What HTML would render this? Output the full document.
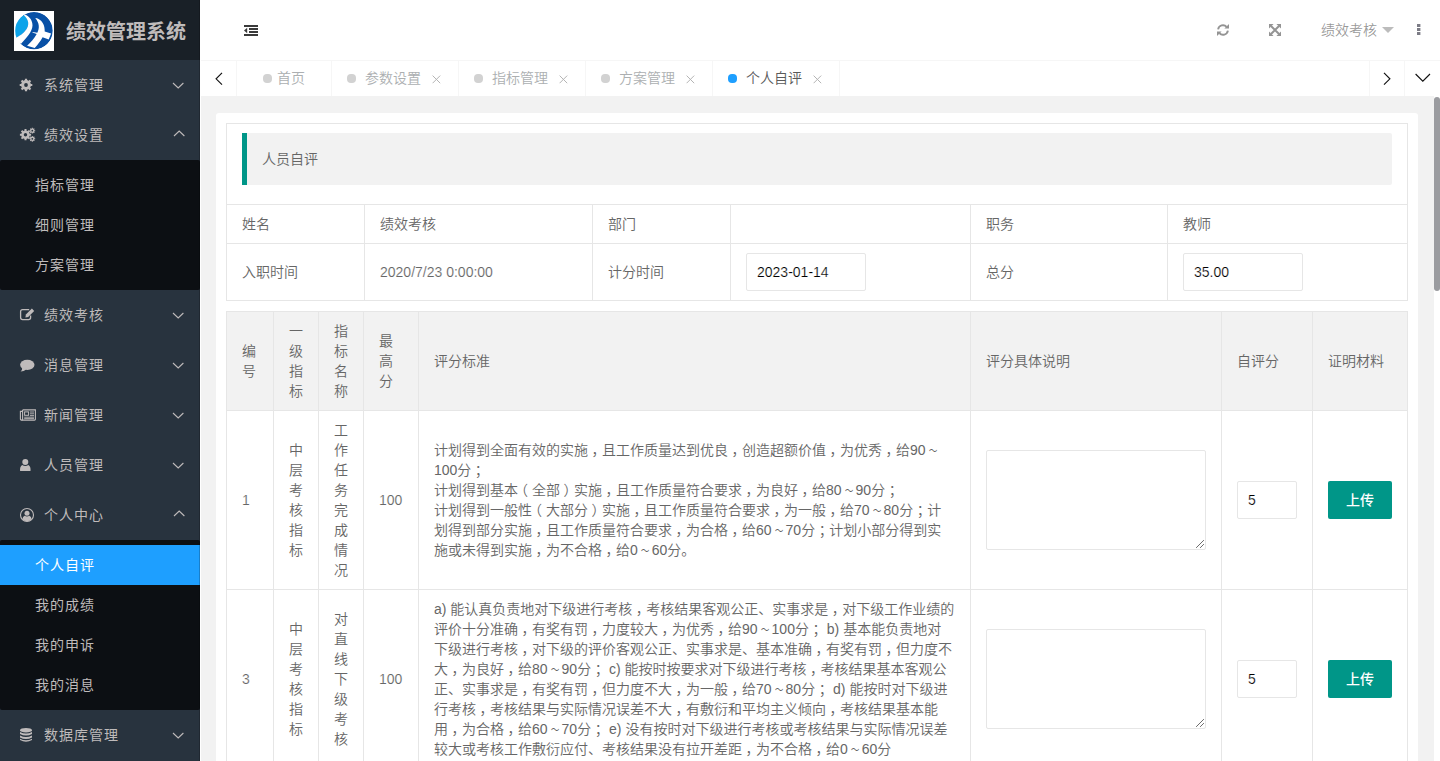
<!DOCTYPE html>
<html lang="zh-CN">
<head>
<meta charset="utf-8">
<title>绩效管理系统</title>
<style>
*{box-sizing:border-box;margin:0;padding:0}
html,body{width:1440px;height:761px;overflow:hidden;background:#f2f2f2}
body{font-family:"Liberation Sans","Noto Sans CJK SC",sans-serif;font-size:14px;color:#333;position:relative;line-height:24px}
a{text-decoration:none;color:inherit}
ul{list-style:none}
/* ---------- side ---------- */
#side{position:absolute;left:0;top:0;width:200px;height:761px;background:#28333e;overflow:hidden}
#side:after{content:"";position:absolute;left:199px;top:0;width:1px;height:761px;background:rgba(0,0,0,.2)}
#logo{height:60px;background:#192027;position:relative}
#logo svg{position:absolute;left:14px;top:11px}
#logo h1{position:absolute;left:66px;top:0;line-height:64px;font-size:20px;font-weight:bold;color:rgb(191,187,187);white-space:nowrap}
.nav-item{height:50px;line-height:50px;position:relative;color:rgb(191,187,187);font-size:14px}
.nav-item .ico{position:absolute}
.nav-item span{position:absolute;left:44px;top:0;white-space:nowrap;letter-spacing:1px}
.nav-item .more{position:absolute;left:172px;top:22px}
.nav-child{background:#0c0f13;padding:5px 0;border-radius:2px}
.nav-child li{height:40px;line-height:40px;padding-left:35px;color:rgb(191,187,187);font-size:14px;letter-spacing:1px}
.nav-child li.this{background:#1e9fff;color:#fff}
/* ---------- header ---------- */
#header{position:absolute;left:200px;top:0;width:1240px;height:60px;background:#fff}
#header svg{position:absolute}
#header .uname{font-weight:350;position:absolute;left:1121px;top:0;line-height:60px;font-size:14px;color:rgba(107,107,107,.7);white-space:nowrap}
#header .caret{position:absolute;left:1182px;top:27.4px;width:0;height:0;border:6px solid transparent;border-top-color:rgba(160,160,160,.7);border-bottom-width:0}
/* ---------- tabs ---------- */
#tabs{position:absolute;left:200px;top:60px;width:1240px;height:36px;background:#fff;border-left:1px solid #fff}
#tabs:before{content:"";position:absolute;left:0;top:0;width:1239px;height:1px;background:#f6f6f6}
#tabs .ctl{position:absolute;top:1px;height:35px;border-right:1px solid #f6f6f6}
#tabs .ctl svg{position:absolute}
#tabs .tab{position:absolute;top:1px;height:35px;line-height:35px;border-right:1px solid #f6f6f6;color:#acafb1;font-size:14px;white-space:nowrap}
#tabs .tab i{position:absolute;top:12.7px;width:9px;height:9.4px;border-radius:4px;background:#d2d2d2}
#tabs .tab b{position:absolute;font-weight:350;top:0}
#tabs .tab svg{position:absolute;top:14px}
#tabs .tab.this{color:#5a5a5a}
#tabs .tab.this i{background:#1e9fff}
/* ---------- body ---------- */
#main{position:absolute;left:200px;top:96px;width:1240px;height:665px;overflow:hidden;background:#f2f2f2}
#lstrip{position:absolute;left:0;top:0;width:1px;height:665px;background:#fff}
#strack{position:absolute;right:0;top:0;width:6px;height:665px;background:#fff}
#sbar{position:absolute;right:0;top:1px;width:6px;height:194px;border-radius:3px;background:#9b9ca0}
#card{position:absolute;left:16px;top:17px;width:1202px;height:900px;background:#fff;border-radius:3px;padding:10px}
table{border-collapse:collapse;border-spacing:0;table-layout:fixed;width:1181px;color:#666;font-size:14px;font-weight:350}
table td,table th{border:1px solid #e6e6e6;padding:9px 15px;line-height:20px;font-weight:inherit;text-align:left;vertical-align:middle;word-break:break-all}
#t2{margin-top:10px}
#t2 th{background:#f2f2f2}
.quote{border-left:5px solid #009688;background:#f2f2f2;border-radius:0 2px 2px 0;padding:15px;line-height:22px;margin-bottom:10px;height:52px}
.inp{display:block;height:38px;line-height:36px;border:1px solid #e6e6e6;border-radius:2px;background:#fff;padding-left:10px;color:#000;font-size:14px;font-weight:400;-webkit-text-stroke:0.2px #fff}
.num{-webkit-text-stroke:0.15px #fff}
.ta{display:block;width:220px;height:100px;border:1px solid #e6e6e6;border-radius:2px;background:#fff;position:relative}
.ta svg{position:absolute;right:1px;bottom:1px}
.btn{display:block;width:64px;height:38px;line-height:38px;background:#009688;color:#fff;text-align:center;border-radius:2px;font-size:14px;font-weight:500}
.crit{white-space:nowrap}
.crit i{font-style:normal;position:relative}
.crit i.pr{left:3.5px}
.crit i.pl{left:-4px}
.crit i.tl{display:inline-block;width:14px;line-height:14px;text-align:center;transform:scale(.62,.9);vertical-align:baseline}
</style>
</head>
<body>
<div id="side">
  <div id="logo">
    <svg width="40" height="40" viewBox="0 0 40 40"><rect width="40" height="40" fill="#fff"/><circle cx="20" cy="19.7" r="18.8" fill="#0850a6"/><path d="M10.3 4.1 C14 8 15.4 12 13.2 16.8 C11.4 20.6 7 24.4 2.4 26.9 L-1 20 L2 8 Z" fill="#0da4ea"/><path d="M10.9 3.6 C15.5 5.6 18.6 9.6 18.5 14.5 C18.4 20.5 12.4 27 7.1 32.8 L1 30 L2.6 26.6 C7 24.2 11.4 20.6 13.2 16.8 C15.4 12 14 8 10 4.4 Z" fill="#fff"/><path d="M21.3 7.1 C26 7.6 29.6 11.6 30.4 16.4 C30.7 18 30.7 19.4 30.7 20.5 L37.1 22.6 L34.7 28.4 L28.6 26.2 C26.4 30.2 23.8 33.6 20.7 36.9 L13.1 34.7 C17 31 20.2 27.4 22.7 22.9 L18.4 21.4 L18.6 20.9 L23.3 21.8 C25.6 17.4 25.6 12.4 21.3 7.1 Z" fill="#fff"/><circle cx="20" cy="19.7" r="21.8" fill="none" stroke="#fff" stroke-width="6"/></svg>
    <h1>绩效管理系统</h1>
  </div>
  <ul id="nav">
<li><div class="nav-item"><svg class="ico" style="left:19.1px;top:18px" width="14" height="14" viewBox="0 0 14 14"><g transform="translate(7 7)"><path d="M-1.1 -6.3 H1.1 V6.3 H-1.1 Z M-6.3 -1.1 H6.3 V1.1 H-6.3 Z" fill="rgb(191,187,187)"/><path d="M-1.1 -6.3 H1.1 V6.3 H-1.1 Z M-6.3 -1.1 H6.3 V1.1 H-6.3 Z" fill="rgb(191,187,187)" transform="rotate(45)"/><circle r="4.9" fill="rgb(191,187,187)"/><circle r="1.9" fill="#28333e"/></g></svg><span>系统管理</span><svg class="more" style="left:172px;top:21.6px" width="12.4" height="7" viewBox="0 0 12.4 7"><path d="M1 1 L6.2 6 L11.4 1" fill="none" stroke="rgb(191,187,187)" stroke-width="1.1"/></svg></div>
</li>
<li><div class="nav-item"><svg class="ico" style="left:19px;top:17px" width="17" height="16" viewBox="0 0 17 16"><g transform="translate(6.5 7.7)"><path d="M-1.0 -5.6 H1.0 V5.6 H-1.0 Z M-5.6 -1.0 H5.6 V1.0 H-5.6 Z" fill="rgb(191,187,187)"/><path d="M-1.0 -5.6 H1.0 V5.6 H-1.0 Z M-5.6 -1.0 H5.6 V1.0 H-5.6 Z" fill="rgb(191,187,187)" transform="rotate(45)"/><circle r="4.3" fill="rgb(191,187,187)"/><circle r="1.7" fill="#28333e"/></g><g transform="translate(13.3 3.7)"><path d="M-0.55 -2.9 H0.55 V2.9 H-0.55 Z M-2.9 -0.55 H2.9 V0.55 H-2.9 Z" fill="rgb(191,187,187)"/><path d="M-0.55 -2.9 H0.55 V2.9 H-0.55 Z M-2.9 -0.55 H2.9 V0.55 H-2.9 Z" fill="rgb(191,187,187)" transform="rotate(45)"/><circle r="2.1" fill="rgb(191,187,187)"/><circle r="0.9" fill="#28333e"/></g><g transform="translate(13.3 11.8)"><path d="M-0.55 -2.9 H0.55 V2.9 H-0.55 Z M-2.9 -0.55 H2.9 V0.55 H-2.9 Z" fill="rgb(191,187,187)"/><path d="M-0.55 -2.9 H0.55 V2.9 H-0.55 Z M-2.9 -0.55 H2.9 V0.55 H-2.9 Z" fill="rgb(191,187,187)" transform="rotate(45)"/><circle r="2.1" fill="rgb(191,187,187)"/><circle r="0.9" fill="#28333e"/></g></svg><span>绩效设置</span><svg class="more" style="left:173px;top:20.1px" width="12.4" height="7" viewBox="0 0 12.4 7"><path d="M1 6 L6.2 1 L11.4 6" fill="none" stroke="rgb(191,187,187)" stroke-width="1.1"/></svg></div>
<ul class="nav-child"><li>指标管理</li><li>细则管理</li><li>方案管理</li></ul>
</li>
<li><div class="nav-item"><svg class="ico" style="left:19px;top:17px" width="17" height="15" viewBox="0 0 17 15"><path d="M10.2 2.6 H3.6 Q1.6 2.6 1.6 4.6 V10.6 Q1.6 12.6 3.6 12.6 H9.6 Q11.6 12.6 11.6 10.6 V8.6" fill="none" stroke="rgb(191,187,187)" stroke-width="1.3"/><path d="M6.4 10.4 L6.9 7.6 L12.9 1.6 L15.2 3.9 L9.2 9.9 Z" fill="rgb(191,187,187)"/></svg><span>绩效考核</span><svg class="more" style="left:172px;top:21.6px" width="12.4" height="7" viewBox="0 0 12.4 7"><path d="M1 1 L6.2 6 L11.4 1" fill="none" stroke="rgb(191,187,187)" stroke-width="1.1"/></svg></div>
</li>
<li><div class="nav-item"><svg class="ico" style="left:19px;top:18px" width="17" height="15" viewBox="0 0 17 15"><ellipse cx="8.3" cy="6.8" rx="7.2" ry="5.1" fill="rgb(191,187,187)"/><path d="M3.2 9.5 Q3.4 12.4 1.6 13.6 Q5 13.4 7.2 11.4 Z" fill="rgb(191,187,187)"/></svg><span>消息管理</span><svg class="more" style="left:172px;top:21.6px" width="12.4" height="7" viewBox="0 0 12.4 7"><path d="M1 1 L6.2 6 L11.4 1" fill="none" stroke="rgb(191,187,187)" stroke-width="1.1"/></svg></div>
</li>
<li><div class="nav-item"><svg class="ico" style="left:19px;top:17.5px" width="18" height="14" viewBox="0 0 18 14"><path d="M3.6 1.9 H16.4 V11.2 Q16.4 12.1 15.5 12.1 H2.6 Q1.4 12.1 1.4 10.9 V3.4 H3.6" fill="none" stroke="rgb(191,187,187)" stroke-width="1.1"/><path d="M3.6 1.9 V10.8 Q3.6 12.1 2.6 12.1" fill="none" stroke="rgb(191,187,187)" stroke-width="1.1"/><rect x="5.6" y="3.9" width="4" height="3.4" fill="none" stroke="rgb(191,187,187)" stroke-width="1"/><path d="M11 4 H15 M11 5.8 H15 M11 7.6 H15 M5.2 9.2 H15 M5.2 10.6 H15" stroke="rgb(191,187,187)" stroke-width=".9"/></svg><span>新闻管理</span><svg class="more" style="left:172px;top:21.6px" width="12.4" height="7" viewBox="0 0 12.4 7"><path d="M1 1 L6.2 6 L11.4 1" fill="none" stroke="rgb(191,187,187)" stroke-width="1.1"/></svg></div>
</li>
<li><div class="nav-item"><svg class="ico" style="left:19px;top:18px" width="13" height="14" viewBox="0 0 13 14"><circle cx="6.3" cy="3.9" r="3" fill="rgb(191,187,187)"/><path d="M1.1 12.9 H11.5 Q12 8.3 9.4 6.9 Q6.3 9 3.2 6.9 Q0.6 8.3 1.1 12.9 Z" fill="rgb(191,187,187)"/></svg><span>人员管理</span><svg class="more" style="left:172px;top:21.6px" width="12.4" height="7" viewBox="0 0 12.4 7"><path d="M1 1 L6.2 6 L11.4 1" fill="none" stroke="rgb(191,187,187)" stroke-width="1.1"/></svg></div>
</li>
<li><div class="nav-item"><svg class="ico" style="left:19px;top:17px" width="16" height="16" viewBox="0 0 16 16"><circle cx="8" cy="8" r="6.5" fill="none" stroke="rgb(191,187,187)" stroke-width="1.1"/><circle cx="8" cy="6.2" r="2.5" fill="rgb(191,187,187)"/><path d="M3.4 12.2 Q3.6 9.4 5.6 8.8 Q8 10.4 10.4 8.8 Q12.4 9.4 12.6 12.2 Q10.6 14.2 8 14.2 Q5.4 14.2 3.4 12.2 Z" fill="rgb(191,187,187)"/></svg><span>个人中心</span><svg class="more" style="left:173px;top:20.1px" width="12.4" height="7" viewBox="0 0 12.4 7"><path d="M1 6 L6.2 1 L11.4 6" fill="none" stroke="rgb(191,187,187)" stroke-width="1.1"/></svg></div>
<ul class="nav-child"><li class="this">个人自评</li><li>我的成绩</li><li>我的申诉</li><li>我的消息</li></ul>
</li>
<li><div class="nav-item"><svg class="ico" style="left:19px;top:17px" width="14" height="16" viewBox="0 0 14 16"><ellipse cx="7" cy="3.2" rx="6" ry="2.3" fill="rgb(191,187,187)"/><path d="M1 5 Q7 8 13 5 V7 Q7 10 1 7 Z M1 8.4 Q7 11.4 13 8.4 V10.4 Q7 13.4 1 10.4 Z M1 11.8 Q7 14.8 13 11.8 V13 Q7 16.4 1 13 Z" fill="rgb(191,187,187)"/></svg><span>数据库管理</span><svg class="more" style="left:172px;top:21.6px" width="12.4" height="7" viewBox="0 0 12.4 7"><path d="M1 1 L6.2 6 L11.4 1" fill="none" stroke="rgb(191,187,187)" stroke-width="1.1"/></svg></div>
</li>
</ul>
</div>
<div id="header">
<svg style="left:44px;top:25px" width="14" height="11" viewBox="0 0 14 11"><rect x="0" y="0" width="14" height="2" fill="#3a3a3a"/><rect x="5" y="3" width="9" height="2" fill="#3a3a3a"/><rect x="5" y="6" width="9" height="2" fill="#3a3a3a"/><rect x="0" y="9" width="14" height="2" fill="#3a3a3a"/><path d="M3.2 2.8 V8.2 L0 5.5 Z" fill="#3a3a3a"/></svg>
<svg style="left:1017px;top:24px" width="12" height="12" viewBox="0 0 12 12"><path d="M1.1 5.3 A4.9 4.9 0 0 1 9.6 2.9" fill="none" stroke="#949494" stroke-width="1.9"/><path d="M12 0 V4.6 H7.4 Z" fill="#949494"/><path d="M10.9 6.7 A4.9 4.9 0 0 1 2.4 9.1" fill="none" stroke="#949494" stroke-width="1.9"/><path d="M0 12 V7.4 H4.6 Z" fill="#949494"/></svg>
<svg style="left:1069px;top:24px" width="12" height="12" viewBox="0 0 12 12"><path d="M2 2 L10 10 M10 2 L2 10" stroke="#949494" stroke-width="2"/><path d="M0 0 H4.6 L0 4.6 Z M12 0 V4.6 L7.4 0 Z M0 12 V7.4 L4.6 12 Z M12 12 H7.4 L12 7.4 Z" fill="#949494"/></svg>
<div class="uname">绩效考核</div><div class="caret"></div>
<svg style="left:1217px;top:24px" width="4" height="11" viewBox="0 0 4 11"><rect x="0" y="0" width="3.4" height="3" fill="#7c7c86"/><rect x="0" y="4" width="3.4" height="3" fill="#7c7c86"/><rect x="0" y="8" width="3.4" height="3" fill="#7c7c86"/></svg>
</div>
<div id="tabs">
<div class="ctl" style="left:0;width:36px"><svg style="left:14px;top:10.7px" width="9" height="14" viewBox="0 0 9 14"><path d="M7 0.9 L1.1 6.8 L7 12.7" fill="none" stroke="#111" stroke-width="1.15"/></svg></div>
<div class="tab" style="left:36px;width:95px"><i style="left:26px"></i><b style="left:40px">首页</b></div>
<div class="tab" style="left:131px;width:127px"><i style="left:15px"></i><b style="left:33px">参数设置</b><svg style="left:99.5px" width="9" height="9" viewBox="0 0 9 9"><path d="M0.6 0.6 L8.2 8.2 M8.2 0.6 L0.6 8.2" stroke="#b4b4b4" stroke-width="1"/></svg></div>
<div class="tab" style="left:258px;width:127px"><i style="left:15px"></i><b style="left:33px">指标管理</b><svg style="left:99.5px" width="9" height="9" viewBox="0 0 9 9"><path d="M0.6 0.6 L8.2 8.2 M8.2 0.6 L0.6 8.2" stroke="#b4b4b4" stroke-width="1"/></svg></div>
<div class="tab" style="left:385px;width:127px"><i style="left:15px"></i><b style="left:33px">方案管理</b><svg style="left:99.5px" width="9" height="9" viewBox="0 0 9 9"><path d="M0.6 0.6 L8.2 8.2 M8.2 0.6 L0.6 8.2" stroke="#b4b4b4" stroke-width="1"/></svg></div>
<div class="tab this" style="left:512px;width:127px"><i style="left:15px"></i><b style="left:33px">个人自评</b><svg style="left:99.5px" width="9" height="9" viewBox="0 0 9 9"><path d="M0.6 0.6 L8.2 8.2 M8.2 0.6 L0.6 8.2" stroke="#b4b4b4" stroke-width="1"/></svg></div>
<div class="ctl" style="left:1168px;width:36px;border-left:1px solid #f6f6f6"><svg style="left:13.4px;top:10.7px" width="9" height="14" viewBox="0 0 9 14"><path d="M1 0.9 L6.9 6.8 L1 12.7" fill="none" stroke="#111" stroke-width="1.15"/></svg></div>
<div class="ctl" style="left:1204px;width:35px;border-right:0"><svg style="left:10px;top:12.4px" width="16" height="9" viewBox="0 0 16 9"><path d="M0.6 1 L7.8 8.2 L15 1" fill="none" stroke="#111" stroke-width="1.15"/></svg></div>
</div>
<div id="main">
  <div id="card">
<table id="t1"><colgroup><col style="width:138px"><col style="width:228px"><col style="width:138px"><col style="width:240px"><col style="width:197px"><col style="width:240px"></colgroup>
<tr><td colspan="6"><div class="quote">人员自评</div></td></tr>
<tr><td>姓名</td><td>绩效考核</td><td>部门</td><td></td><td>职务</td><td>教师</td></tr>
<tr><td>入职时间</td><td class="num">2020/7/23 0:00:00</td><td>计分时间</td><td><div class="inp" style="width:120px">2023-01-14</div></td><td>总分</td><td><div class="inp" style="width:120px">35.00</div></td></tr>
</table>
<table id="t2"><colgroup><col style="width:47px"><col style="width:45px"><col style="width:45px"><col style="width:55px"><col style="width:552px"><col style="width:251px"><col style="width:91px"><col style="width:95px"></colgroup>
<tr><th>编号</th><th>一级指标</th><th>指标名称</th><th>最高分</th><th>评分标准</th><th>评分具体说明</th><th>自评分</th><th>证明材料</th></tr>
<tr><td class="num">1</td><td>中层考核指标</td><td>工作任务完成情况</td><td class="num">100</td><td><div class="crit">计划得到全面有效的实施<i class="pr">，</i>且工作质量达到优良<i class="pr">，</i>创造超额价值<i class="pr">，</i>为优秀<i class="pr">，</i>给90<i class="tl">～</i><br>100分<i class="pr">；</i><br>计划得到基本<i class="pl">（</i>全部<i class="pr">）</i>实施<i class="pr">，</i>且工作质量符合要求<i class="pr">，</i>为良好<i class="pr">，</i>给80<i class="tl">～</i>90分<i class="pr">；</i><br>计划得到一般性<i class="pl">（</i>大部分<i class="pr">）</i>实施<i class="pr">，</i>且工作质量符合要求<i class="pr">，</i>为一般<i class="pr">，</i>给70<i class="tl">～</i>80分<i class="pr">；</i>计<br>划得到部分实施<i class="pr">，</i>且工作质量符合要求<i class="pr">，</i>为合格<i class="pr">，</i>给60<i class="tl">～</i>70分<i class="pr">；</i>计划小部分得到实<br>施或未得到实施<i class="pr">，</i>为不合格<i class="pr">，</i>给0<i class="tl">～</i>60分。</div></td><td><div class="ta"><svg width="8" height="8" viewBox="0 0 8 8"><path d="M7.9 0.1 L0.1 7.9 M7.9 4.1 L4.1 7.9" stroke="#505050" stroke-width="0.85"/></svg></div></td><td><div class="inp" style="width:60px">5</div></td><td><div class="btn">上传</div></td></tr>
<tr><td class="num">3</td><td>中层考核指标</td><td>对直线下级考核</td><td class="num">100</td><td><div class="crit">a) 能认真负责地对下级进行考核<i class="pr">，</i>考核结果客观公正、实事求是<i class="pr">，</i>对下级工作业绩的<br>评价十分准确<i class="pr">，</i>有奖有罚<i class="pr">，</i>力度较大<i class="pr">，</i>为优秀<i class="pr">，</i>给90<i class="tl">～</i>100分<i class="pr">；</i> b) 基本能负责地对<br>下级进行考核<i class="pr">，</i>对下级的评价客观公正、实事求是、基本准确<i class="pr">，</i>有奖有罚<i class="pr">，</i>但力度不<br>大<i class="pr">，</i>为良好<i class="pr">，</i>给80<i class="tl">～</i>90分<i class="pr">；</i> c) 能按时按要求对下级进行考核<i class="pr">，</i>考核结果基本客观公<br>正、实事求是<i class="pr">，</i>有奖有罚<i class="pr">，</i>但力度不大<i class="pr">，</i>为一般<i class="pr">，</i>给70<i class="tl">～</i>80分<i class="pr">；</i> d) 能按时对下级进<br>行考核<i class="pr">，</i>考核结果与实际情况误差不大<i class="pr">，</i>有敷衍和平均主义倾向<i class="pr">，</i>考核结果基本能<br>用<i class="pr">，</i>为合格<i class="pr">，</i>给60<i class="tl">～</i>70分<i class="pr">；</i> e) 没有按时对下级进行考核或考核结果与实际情况误差<br>较大或考核工作敷衍应付、考核结果没有拉开差距<i class="pr">，</i>为不合格<i class="pr">，</i>给0<i class="tl">～</i>60分</div></td><td><div class="ta"><svg width="8" height="8" viewBox="0 0 8 8"><path d="M7.9 0.1 L0.1 7.9 M7.9 4.1 L4.1 7.9" stroke="#505050" stroke-width="0.85"/></svg></div></td><td><div class="inp" style="width:60px">5</div></td><td><div class="btn">上传</div></td></tr>
</table>
</div>
  <div id="lstrip"></div><div id="strack"></div><div id="sbar"></div>
</div>
</body>
</html>
